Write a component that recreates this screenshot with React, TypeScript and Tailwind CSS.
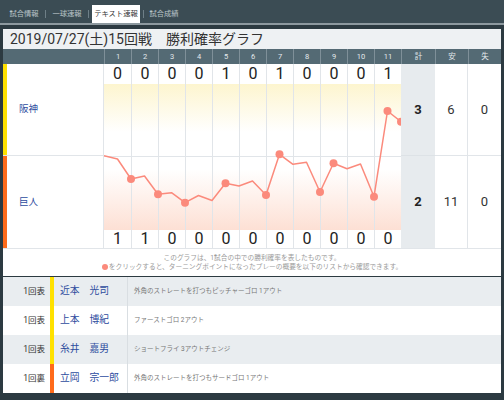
import React from 'react';

const innings = ['1', '2', '3', '4', '5', '6', '7', '8', '9', '10', '11'];
const tigers = ['0', '0', '0', '0', '1', '0', '1', '0', '0', '0', '1'];
const giants = ['1', '1', '0', '0', '0', '0', '0', '0', '0', '0', '0'];

// win probability line, local coords of the 297x146 chart area
const pts: [number, number][] = [
  [0, 71.7], [13.5, 75], [27, 95], [40.5, 92], [54, 110.3], [67.5, 108.7],
  [81, 118.7], [94.5, 111.5], [108, 116.5], [121.5, 99.3], [135, 102],
  [148.5, 97], [162, 111], [175.5, 70.3], [189, 80.3], [202.5, 78.3],
  [216, 108], [229.5, 79.3], [243, 84.7], [256.5, 80], [270, 112.7],
  [283.5, 27], [297, 37.7],
];
const dots = [2, 4, 6, 9, 12, 13, 16, 17, 20, 21, 22];

const plays = [
  { inning: '1回表', name: '近本　光司', text: '外角のストレートを打つもピッチャーゴロ 1アウト', bar: 'bg-[#ffe100]', bg: 'bg-[#e9edf0]' },
  { inning: '1回表', name: '上本　博紀', text: 'ファーストゴロ 2アウト', bar: 'bg-[#ffe100]', bg: 'bg-white' },
  { inning: '1回表', name: '糸井　嘉男', text: 'ショートフライ 3アウトチェンジ', bar: 'bg-[#ffe100]', bg: 'bg-[#e9edf0]' },
  { inning: '1回裏', name: '立岡　宗一郎', text: '外角のストレートを打つもサードゴロ 1アウト', bar: 'bg-[#ff6b1a]', bg: 'bg-white' },
];

function Chart() {
  return (
    <svg width={297} height={146} viewBox="0 0 297 146" className="block overflow-hidden">
      <defs>
        <linearGradient id="top" x1="0" y1="0" x2="0" y2="1">
          <stop offset="0" stopColor="#fdf5cf" />
          <stop offset="1" stopColor="#ffffff" />
        </linearGradient>
        <linearGradient id="bottom" x1="0" y1="0" x2="0" y2="1">
          <stop offset="0" stopColor="#ffffff" />
          <stop offset="1" stopColor="#fde0d4" />
        </linearGradient>
      </defs>
      <rect x={0} y={0} width={297} height={48} fill="url(#top)" />
      <rect x={0} y={85} width={297} height={61} fill="url(#bottom)" />
      {innings.slice(1).map((_, i) => (
        <line key={i} x1={27 * (i + 1) + 0.5} y1={0} x2={27 * (i + 1) + 0.5} y2={146} stroke="#e1e5e9" strokeWidth={1} />
      ))}
      <line x1={0} y1={72.5} x2={297} y2={72.5} stroke="#e1e5e9" strokeWidth={1} />
      <polyline
        points={pts.map(([x, y]) => `${x},${y}`).join(' ')}
        fill="none"
        stroke="#fb8a7c"
        strokeWidth={1.5}
        strokeLinejoin="round"
      />
      {dots.map((i) => (
        <circle key={i} cx={pts[i][0]} cy={pts[i][1]} r={4} fill="#fb8a7c" />
      ))}
    </svg>
  );
}

export default function App() {
  return (
    <div
      className="w-[504px] h-[400px] overflow-hidden bg-[#2c3a41] text-[#333]"
      style={{ fontFamily: 'Roboto, "Noto Sans CJK JP", sans-serif' }}
    >
      {/* Tabs */}
      <div className="h-[23px] bg-[#3b4c54] flex items-end pl-[3px] text-[7.3px] text-[#b9c4c9]">
        <div className="w-[42px] h-[18px] flex items-center justify-center">試合情報</div>
        <div className="w-px h-[8px] bg-[#6e7f87] mb-[5px]" />
        <div className="w-[42px] h-[18px] flex items-center justify-center">一球速報</div>
        <div className="w-px h-[8px] bg-[#6e7f87] mb-[5px]" />
        <div className="ml-[3px] w-[48px] h-[18px] flex items-center justify-center bg-white text-[#333]">テキスト速報</div>
        <div className="ml-[3px] w-px h-[8px] bg-[#6e7f87] mb-[5px]" />
        <div className="w-[40px] h-[18px] flex items-center justify-center">試合成績</div>
      </div>
      <div className="h-[2px] bg-[#8d999f]" />

      <div className="px-[3px] pt-[4px]">
        {/* Title */}
        <div className="h-[20px] bg-[#eef1f3] flex items-center pl-[7px] text-[14px] text-[#333] leading-none">
          2019/07/27(土)15回戦　勝利確率グラフ
        </div>

        {/* Header */}
        <div className="h-[15px] bg-[#546a74] flex text-[7.5px] text-[#e3e9ec]">
          <div className="w-[101px]" />
          {innings.map((n) => (
            <div key={n} className="w-[27px] border-l border-[#7f9099] flex items-center justify-center pt-px">{n}</div>
          ))}
          <div className="w-[34px] border-l border-[#7f9099] flex items-center justify-center">計</div>
          <div className="w-[33px] border-l border-[#7f9099] flex items-center justify-center">安</div>
          <div className="w-[33px] border-l border-[#7f9099] flex items-center justify-center">失</div>
        </div>

        {/* Body */}
        <div className="flex bg-white">
          <div className="w-[101px] flex flex-col border-r border-[#e1e5e9]">
            <div className="h-[92px] flex items-center border-b border-[#e1e5e9]">
              <div className="w-[4px] self-stretch bg-[#ffe100]" />
              <div className="pl-[12px] text-[9.5px] text-[#2d4c9e]">阪神</div>
            </div>
            <div className="h-[92px] flex items-center">
              <div className="w-[4px] self-stretch bg-[#ff6b1a]" />
              <div className="pl-[12px] text-[9.5px] text-[#2d4c9e]">巨人</div>
            </div>
          </div>

          <div className="w-[297px] flex flex-col overflow-hidden">
            <div className="h-[20px] flex text-[16px] leading-none text-[#222]">
              {tigers.map((s, i) => (
                <div key={i} className={`w-[27px] shrink-0 flex items-center justify-center ${i > 0 ? 'border-l border-[#e1e5e9]' : ''}`}>{s}</div>
              ))}
            </div>
            <Chart />
            <div className="h-[18px] flex text-[16px] leading-none text-[#222]">
              {giants.map((s, i) => (
                <div key={i} className={`w-[27px] shrink-0 flex items-center justify-center ${i > 0 ? 'border-l border-[#e1e5e9]' : ''}`}>{s}</div>
              ))}
            </div>
          </div>

          <div className="w-[34px] flex flex-col bg-[#e7ebee] text-[13px] font-bold text-[#222]">
            <div className="h-[92px] flex items-center justify-center border-b border-[#dde2e6]">3</div>
            <div className="h-[92px] flex items-center justify-center">2</div>
          </div>
          <div className="w-[33px] flex flex-col border-r border-[#e1e5e9] text-[13px] text-[#333]">
            <div className="h-[92px] flex items-center justify-center border-b border-[#e1e5e9]">6</div>
            <div className="h-[92px] flex items-center justify-center">11</div>
          </div>
          <div className="w-[33px] flex flex-col text-[13px] text-[#333]">
            <div className="h-[92px] flex items-center justify-center border-b border-[#e1e5e9]">0</div>
            <div className="h-[92px] flex items-center justify-center">0</div>
          </div>
        </div>

        {/* Notes */}
        <div className="h-[28px] bg-white border-t border-[#e1e5e9] flex flex-col items-center justify-center text-[6.7px] leading-[9px] text-[#9a9a9a]">
          <div>このグラフは、1試合の中での勝利確率を表したものです。</div>
          <div className="flex items-center">
            <span className="inline-block w-[6px] h-[6px] rounded-full bg-[#fb8a7c] mr-px" />
            をクリックすると、ターニングポイントになったプレーの概要を以下のリストから確認できます。
          </div>
        </div>

        {/* Plays */}
        <div className="mt-px">
          {plays.map((p, i) => (
            <div key={i} className={`h-[29px] flex ${p.bg}`}>
              <div className="w-[47px] flex items-center justify-end pr-[5px] text-[8.5px] text-[#333]">{p.inning}</div>
              <div className={`w-[4px] ${p.bar}`} />
              <div className="w-[74px] flex items-center pl-[6px] text-[9.8px] text-[#2d4c9e] border-r border-[#d9dee2]">{p.name}</div>
              <div className="flex-1 flex items-center pl-[6px] text-[6.5px] text-[#777]">{p.text}</div>
            </div>
          ))}
        </div>
      </div>
    </div>
  );
}
